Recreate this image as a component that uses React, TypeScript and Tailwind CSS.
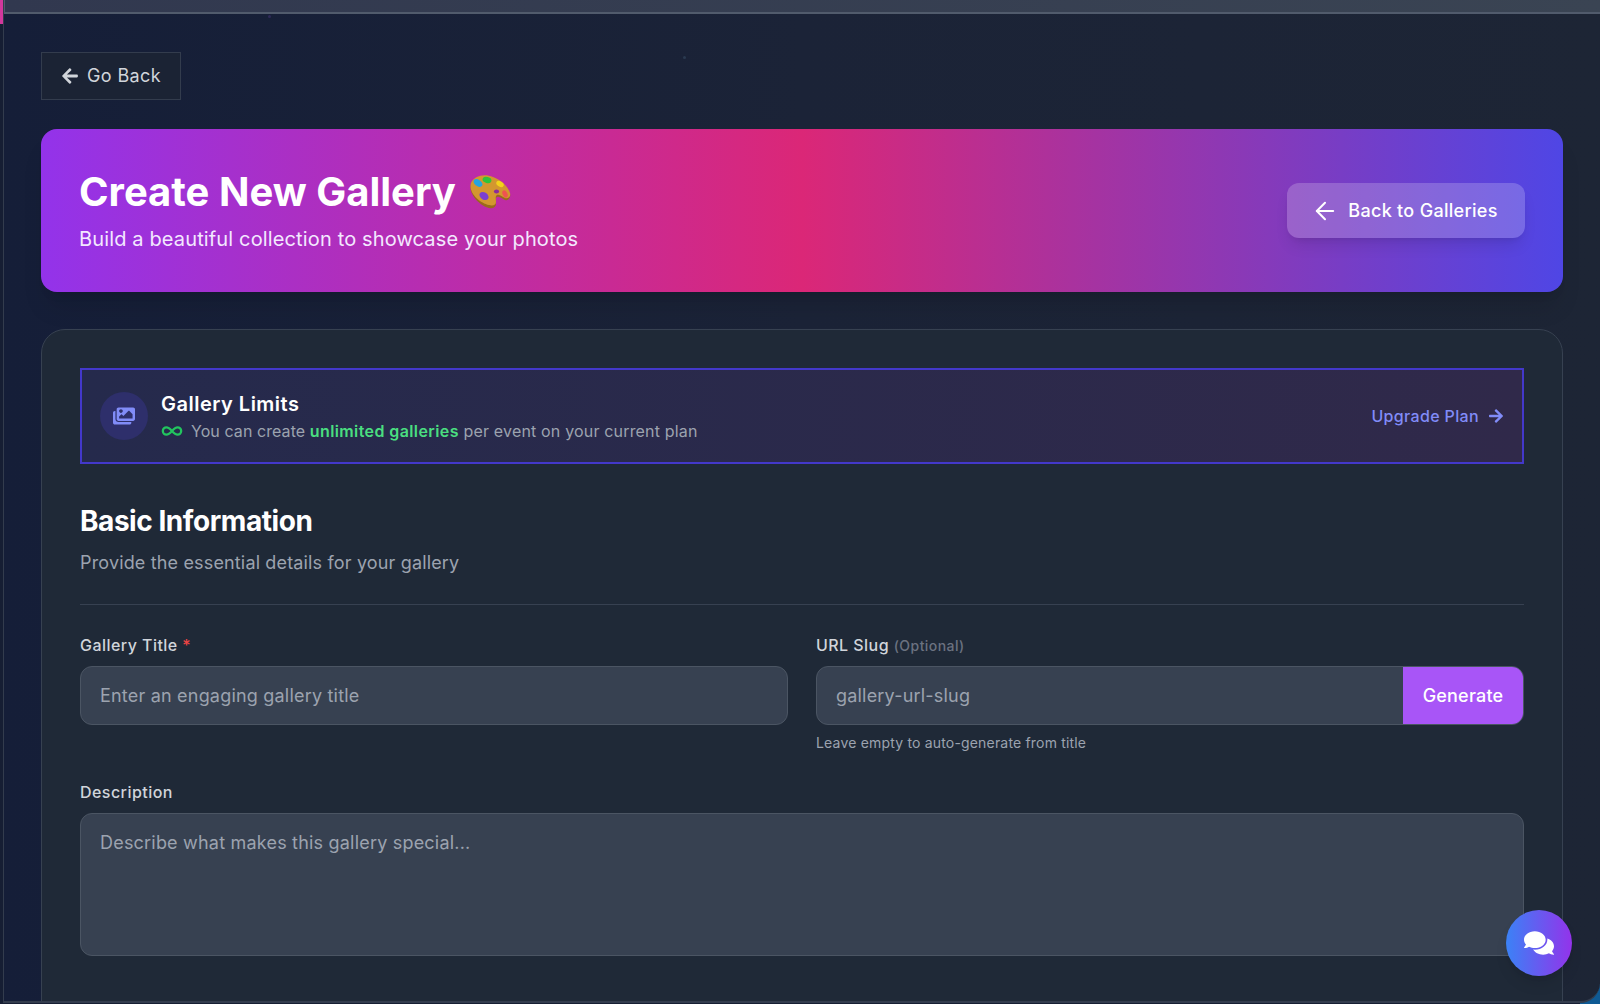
import { ArrowLeft, Infinity as InfinityIcon } from 'lucide-react';
import { FaArrowLeft, FaArrowRight, FaComments, FaImages } from 'react-icons/fa';

const font = { fontFamily: 'Inter, "Liberation Sans", sans-serif' };

// 🎨 drawn by hand, no colour emoji font is installed
function Palette() {
  return (
    <svg width="44" height="36" viewBox="0 0 44 36" className="ml-3 shrink-0">
      <path d="M3 10C6 3 16 0 25 4c8 3 15 9 17 16 1 4-2 7-5 6-3-1-5-4-8-3-2 1-1 4-1 7 0 3-3 5-7 4C12 32 0 20 3 10z" fill="#9a6a1c" />
      <path d="M3 9C6 2 16-1 25 3c8 3 15 9 17 16 1 4-2 6-5 5-3-1-5-4-8-3-2 1-1 4-1 7 0 3-3 4-7 3C12 29 0 19 3 9z" fill="#d3972f" />
      <ellipse cx="10" cy="9" rx="5" ry="3.2" fill="#26a4e0" transform="rotate(35 10 9)" />
      <ellipse cx="19" cy="6" rx="4.5" ry="3" fill="#2fc43a" transform="rotate(15 19 6)" />
      <ellipse cx="32" cy="10" rx="4" ry="2.6" fill="#f2d21b" transform="rotate(30 32 10)" />
      <ellipse cx="16" cy="22" rx="5" ry="3.6" fill="#7b3fd0" transform="rotate(35 16 22)" />
      <ellipse cx="28.5" cy="17.5" rx="2.6" ry="2" fill="#8a2b9c" />
      <ellipse cx="37" cy="20" rx="2.4" ry="3.8" fill="#ef5350" transform="rotate(-25 37 20)" />
    </svg>
  );
}

export default function App() {
  return (
    <div style={font} className="relative h-[1004px] w-full overflow-hidden bg-[#161e33]">
      {/* bit of the window behind */}
      <div className="absolute left-0 top-0 h-6 w-[3px] bg-[#d1389c]" />
      <div className="absolute bottom-0 right-0 h-5 w-5 bg-[#0e5a94]" />

      <div className="relative flex h-[1003px] flex-col overflow-hidden rounded-br-[20px] border-b-2 border-l border-[#333c4d] bg-linear-to-r/srgb from-[#151e38] via-[#1b2337] to-[#1d2535] ml-[3px]">
        <div className="absolute left-[264px] top-[15px] h-[3px] w-[3px] rounded-full bg-[#2f2a58]" />
        <div className="absolute left-[679px] top-[56px] h-[3px] w-[3px] rounded-full bg-[#2a3a50]" />
        <div className="h-[14px] shrink-0 border-b-2 border-l border-[#515b6c] bg-linear-to-r/srgb from-[#31384f] to-[#3a4453]" />

        <main className="flex-1 px-[37px] pt-[38px]">
          <button className="flex h-12 w-[140px] items-center justify-center gap-2 border border-[#333c4d] bg-[#1b2334] text-lg tracking-[0.4px] text-[#d1d5db]">
            <FaArrowLeft className="h-[18px] w-[18px]" />
            <span>Go Back</span>
          </button>

          <section className="mt-[29px] flex h-[163px] items-center justify-between rounded-2xl bg-linear-to-r/srgb from-[#9333ea] via-[#db2777] to-[#4f46e5] px-[38px] shadow-xl">
            <div className="pb-[3px]">
              <h1 className="flex items-center text-[40px] font-bold leading-[52px] text-white">
                Create New Gallery
                <Palette />
              </h1>
              <p className="mt-[7px] text-xl leading-7 tracking-[0.14px] text-[#f3e8ff]">
                Build a beautiful collection to showcase your photos
              </p>
            </div>
            <button className="flex h-[55px] w-[238px] items-center justify-center gap-[9px] rounded-xl bg-white/20 pr-[3px] text-lg font-medium tracking-[0.3px] text-white shadow-lg">
              <ArrowLeft className="h-7 w-7" strokeWidth={1.75} />
              <span>Back to Galleries</span>
            </button>
          </section>

          <section className="mt-[37px] h-[800px] rounded-t-3xl border border-[#374151] bg-[#1f2937] px-[38px] pt-[38px]">
            <div className="flex h-[96px] items-center justify-between border-2 border-[#4338ca] bg-linear-to-r/srgb from-[#252a4c] to-[#30294a] px-[18px]">
              <div className="flex items-center gap-[13px]">
                <div className="flex h-12 w-12 items-center justify-center rounded-full bg-[#2e2f6b]">
                  <FaImages className="h-[22px] w-[22px] text-[#818cf8]" />
                </div>
                <div className="pt-px">
                  <h3 className="text-xl font-semibold leading-7 tracking-[0.5px] text-white">Gallery Limits</h3>
                  <p className="mt-px flex items-center text-base leading-6 tracking-[0.17px] text-[#9ca3af]">
                    <InfinityIcon className="mr-2 h-[22px] w-[22px] text-[#22c55e]" strokeWidth={2.5} />
                    <span>
                      <span className="tracking-[0.07px]">You can create </span>
                      <span className="font-semibold tracking-[0.4px] text-[#4ade80]">unlimited galleries</span> per event on your current plan
                    </span>
                  </p>
                </div>
              </div>
              <a className="flex items-center gap-[9px] text-base font-medium tracking-[0.35px] text-[#818cf8]">
                Upgrade Plan
                <FaArrowRight className="h-4 w-4" />
              </a>
            </div>

            <div className="mt-[39px] border-b border-[#374151] pb-[27px]">
              <h2 className="text-[28px] font-bold leading-9 tracking-[-0.45px] text-white">Basic Information</h2>
              <p className="mt-[10px] text-lg leading-7 tracking-[0.155px] text-[#9ca3af]">
                Provide the essential details for your gallery
              </p>
            </div>

            <div className="mt-7 grid grid-cols-2 gap-x-7">
              <div>
                <label className="mb-[9px] block text-base font-medium leading-6 tracking-[0.45px] text-[#d1d5db]">
                  Gallery Title <span className="text-[#ef4444]">*</span>
                </label>
                <input
                  placeholder="Enter an engaging gallery title"
                  className="h-[59px] w-full rounded-xl border border-[#4b5563] bg-[#374151] px-[19px] text-lg tracking-[0.2px] text-white outline-none placeholder:text-[#9ca3af]"
                />
              </div>
              <div>
                <label className="mb-[9px] block text-base font-medium leading-6 tracking-[0.45px] text-[#d1d5db]">
                  URL Slug <span className="text-sm text-[#6b7280]">(Optional)</span>
                </label>
                <div className="flex h-[59px] overflow-hidden rounded-xl border border-[#4b5563] bg-[#374151]">
                  <input
                    placeholder="gallery-url-slug"
                    className="min-w-0 flex-1 bg-transparent px-[19px] text-lg tracking-[0.2px] text-white outline-none placeholder:text-[#9ca3af]"
                  />
                  <button className="w-[120px] bg-[#a855f7] text-lg font-medium tracking-[0.2px] text-white">Generate</button>
                </div>
                <p className="mt-2 text-sm leading-5 tracking-[0.18px] text-[#9ca3af]">Leave empty to auto-generate from title</p>
              </div>
            </div>

            <div className="mt-[27px]">
              <label className="mb-[9px] block text-base font-medium leading-6 tracking-[0.45px] text-[#d1d5db]">Description</label>
              <textarea
                placeholder="Describe what makes this gallery special..."
                className="block h-[143px] w-full resize-none rounded-xl border border-[#4b5563] bg-[#374151] px-[19px] py-[15px] text-lg tracking-[0.2px] text-white outline-none placeholder:text-[#9ca3af]"
              />
            </div>
          </section>
        </main>
      </div>

      <button className="absolute bottom-[28px] right-[28px] flex h-[66px] w-[66px] items-center justify-center rounded-full bg-linear-to-r/srgb from-[#3b82f6] to-[#9333ea] text-white shadow-lg">
        <FaComments className="h-[30px] w-[30px]" />
      </button>
    </div>
  );
}
